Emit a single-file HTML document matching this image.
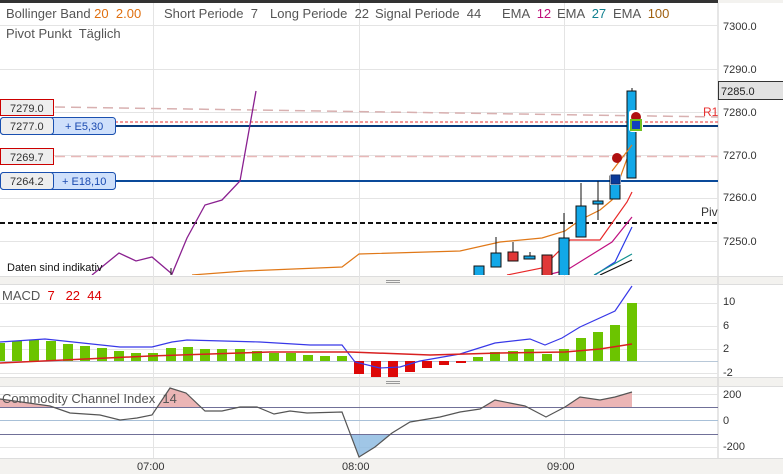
<!DOCTYPE html>
<html><head><meta charset="utf-8"><style>
html,body{margin:0;padding:0;background:#fff;width:783px;height:474px;overflow:hidden}
svg{display:block;font-family:"Liberation Sans",sans-serif}
svg text{white-space:pre}
</style></head><body>
<svg width="783" height="474" viewBox="0 0 783 474" xmlns="http://www.w3.org/2000/svg" xml:space="preserve">
<defs>
<clipPath id="main"><rect x="0" y="3" width="718" height="272"/></clipPath>
<clipPath id="macd"><rect x="0" y="285" width="718" height="92"/></clipPath>
<clipPath id="up"><rect x="0" y="380" width="718" height="27"/></clipPath>
<clipPath id="dn"><rect x="0" y="434" width="718" height="30"/></clipPath>
</defs>
<rect x="0" y="0" width="783" height="474" fill="#fff"/>
<rect x="0" y="0" width="718" height="3" fill="#333"/>
<rect x="718" y="0" width="65" height="3" fill="#666"/>
<rect x="0" y="276" width="783" height="9" fill="#f3f2ef"/>
<rect x="0" y="377" width="783" height="10" fill="#f3f2ef"/>
<rect x="0" y="458" width="783" height="16" fill="#f3f2ef"/>
<rect x="718" y="0" width="65" height="474" fill="#f3f2ef"/>
<rect x="718" y="3" width="65" height="273" fill="#fff"/>
<rect x="718" y="285" width="65" height="92" fill="#fff"/>
<rect x="718" y="387" width="65" height="71" fill="#fff"/>
<line x1="718" y1="3" x2="718" y2="458" stroke="#ccc"/>
<line x1="0" y1="276.5" x2="783" y2="276.5" stroke="#ddd"/>
<line x1="0" y1="284.5" x2="783" y2="284.5" stroke="#ddd"/>
<line x1="0" y1="377.5" x2="783" y2="377.5" stroke="#ddd"/>
<line x1="0" y1="386.5" x2="783" y2="386.5" stroke="#ddd"/>
<line x1="0" y1="458.5" x2="783" y2="458.5" stroke="#ddd"/>
<g stroke="#999" stroke-width="1"><line x1="386" y1="280.5" x2="400" y2="280.5"/><line x1="386" y1="282.5" x2="400" y2="282.5"/><line x1="386" y1="381.5" x2="400" y2="381.5"/><line x1="386" y1="383.5" x2="400" y2="383.5"/></g>
<g stroke="#e4e4e4" stroke-width="1">
<line x1="0" y1="25.5" x2="718" y2="25.5"/>
<line x1="0" y1="69.5" x2="718" y2="69.5"/>
<line x1="0" y1="112.5" x2="718" y2="112.5"/>
<line x1="0" y1="155.5" x2="718" y2="155.5"/>
<line x1="0" y1="198.5" x2="718" y2="198.5"/>
<line x1="0" y1="241.5" x2="718" y2="241.5"/>
<line x1="153.5" y1="3" x2="153.5" y2="458"/>
<line x1="359.5" y1="3" x2="359.5" y2="458"/>
<line x1="564.5" y1="3" x2="564.5" y2="458"/>
<line x1="0" y1="303.5" x2="718" y2="303.5"/>
<line x1="0" y1="326.5" x2="718" y2="326.5"/>
<line x1="0" y1="349.5" x2="718" y2="349.5"/>
<line x1="0" y1="373.5" x2="718" y2="373.5"/>
<line x1="0" y1="394.5" x2="718" y2="394.5"/>
<line x1="0" y1="447.5" x2="718" y2="447.5"/>
</g>
<line x1="0" y1="361.5" x2="718" y2="361.5" stroke="#b8c8d8"/>
<g font-size="13" fill="#555">
<text x="6" y="18">Bollinger Band <tspan fill="#e07010">20</tspan>  <tspan fill="#e07010">2.00</tspan></text>
<text x="164" y="18">Short Periode  7</text>
<text x="270" y="18">Long Periode  22</text>
<text x="375" y="18">Signal Periode  44</text>
<text x="502" y="18">EMA  <tspan fill="#c0107a">12</tspan></text>
<text x="557" y="18">EMA  <tspan fill="#108090">27</tspan></text>
<text x="613" y="18">EMA  <tspan fill="#a06010">100</tspan></text>
<text x="6" y="38">Pivot Punkt  Täglich</text>
</g>
<g clip-path="url(#main)">
<line x1="55" y1="107" x2="718" y2="117" stroke="#d8b0b0" stroke-width="1.5" stroke-dasharray="10,6"/>
<line x1="0" y1="122" x2="718" y2="122" stroke="#e83030" stroke-dasharray="3,2"/>
<line x1="55" y1="156.5" x2="718" y2="156.5" stroke="#e8b8b8" stroke-width="1.5" stroke-dasharray="10,6"/>
<line x1="0" y1="126" x2="718" y2="126" stroke="#0a3a7a" stroke-width="2"/>
<line x1="0" y1="181" x2="718" y2="181" stroke="#0a4a9a" stroke-width="2"/>
<line x1="0" y1="223" x2="718" y2="223" stroke="#111" stroke-width="2" stroke-dasharray="5,3"/>
<polyline fill="none" stroke="#8a2090" stroke-width="1.3" points="92,275 119,253 136,261 152,257 172,274 187,238 205,205 222,200 240,181 256,91"/>
<polyline fill="none" stroke="#e07818" stroke-width="1.2" points="192,275 245,271 342,267 359,254 460,251 500,242 542,238 565,231 580,220 600,210 612,200 632,145"/>
<polyline fill="none" stroke="#e82828" stroke-width="1.2" points="507,275 542,268 570,240 600,240 627,202 632,192"/>
<polyline fill="none" stroke="#c01080" stroke-width="1.2" points="547,275 567,270 612,242 632,217"/>
<polyline fill="none" stroke="#2a3ae8" stroke-width="1.2" points="595,275 615,262 632,227"/>
<polyline fill="none" stroke="#109090" stroke-width="1.2" points="594,275 632,254"/>
<polyline fill="none" stroke="#111" stroke-width="1.2" points="600,275 632,260"/>
<g stroke="#111" stroke-width="1">
<line x1="171" y1="268" x2="171" y2="276"/>
<line x1="496" y1="237" x2="496" y2="253"/>
<line x1="513" y1="242" x2="513" y2="252"/>
<line x1="530" y1="252" x2="530" y2="259"/>
<line x1="564" y1="213" x2="564" y2="238"/>
<line x1="581" y1="183" x2="581" y2="206"/>
<line x1="598" y1="181" x2="598" y2="220"/>
<line x1="632" y1="88" x2="632" y2="91"/>
<rect x="474" y="266" width="10" height="12" fill="#12a8e8"/>
<rect x="491" y="253" width="10" height="14" fill="#12a8e8"/>
<rect x="508" y="252" width="10" height="9" fill="#e03838"/>
<rect x="524" y="256" width="11" height="3" fill="#12a8e8"/>
<rect x="542" y="255" width="10" height="22" fill="#e03838"/>
<rect x="559" y="238" width="10" height="39" fill="#12a8e8"/>
<rect x="576" y="206" width="10" height="31" fill="#12a8e8"/>
<rect x="593" y="201" width="10" height="3" fill="#12a8e8"/>
<rect x="610" y="176" width="10" height="23" fill="#12a8e8"/>
<rect x="627" y="91" width="9" height="87" fill="#12a8e8"/>
</g>
<line x1="612" y1="171" x2="632" y2="145" stroke="#e07818" stroke-width="1.2"/>
<rect x="610" y="174" width="11" height="11" fill="#fff"/>
<rect x="611" y="175" width="9" height="9" fill="#0a3a9a" stroke="#0a2a6a"/>
<circle cx="617" cy="158" r="5" fill="#b01010"/>
<rect x="629" y="110" width="14" height="22" fill="#fff" rx="3"/>
<circle cx="636" cy="117" r="5" fill="#b01010"/>
<rect x="631" y="120" width="10" height="10" fill="#1040c0" stroke="#70c020" stroke-width="2"/>
</g>
<text x="703" y="116" font-size="12" fill="#e83030">R1</text>
<text x="701" y="216" font-size="12" fill="#333">Piv</text>
<text x="7" y="271" font-size="11" fill="#111">Daten sind indikativ</text>
<g font-size="11" fill="#333">
<rect x="0.5" y="99.5" width="53" height="16" fill="#eee" stroke="#c00" />
<text x="10" y="112">7279.0</text>
<rect x="0.5" y="117.5" width="115" height="17" rx="3" fill="#cfe0fb" stroke="#1a50b0"/>
<rect x="0.5" y="117.5" width="53" height="17" rx="3" fill="#eee" stroke="#1a50b0"/>
<text x="10" y="130">7277.0</text>
<text x="65" y="130" fill="#1a4ab0">+ E5,30</text>
<rect x="0.5" y="148.5" width="53" height="16" fill="#eee" stroke="#c00"/>
<text x="10" y="161">7269.7</text>
<rect x="0.5" y="172.5" width="115" height="17" rx="3" fill="#cfe0fb" stroke="#1a50b0"/>
<rect x="0.5" y="172.5" width="53" height="17" rx="3" fill="#eee" stroke="#1a50b0"/>
<text x="10" y="185">7264.2</text>
<text x="62" y="185" fill="#1a4ab0">+ E18,10</text>
</g>
<g font-size="11" fill="#333">
<text x="723" y="30">7300.0</text>
<text x="723" y="73">7290.0</text>
<text x="723" y="116">7280.0</text>
<text x="723" y="159">7270.0</text>
<text x="723" y="201">7260.0</text>
<text x="723" y="245">7250.0</text>
</g>
<rect x="718.5" y="81.5" width="66" height="18" fill="#e2e2e2" stroke="#333"/>
<text x="721" y="95" font-size="11" fill="#222">7285.0</text>
<g clip-path="url(#macd)">
<g fill="#6cc400">
<rect x="-5" y="343" width="10" height="18"/><rect x="12" y="341" width="10" height="20"/><rect x="29" y="340" width="10" height="21"/><rect x="46" y="341" width="10" height="20"/><rect x="63" y="344" width="10" height="17"/><rect x="80" y="346" width="10" height="15"/><rect x="97" y="348" width="10" height="13"/><rect x="114" y="351" width="10" height="10"/><rect x="131" y="353" width="10" height="8"/><rect x="148" y="353" width="10" height="8"/><rect x="166" y="348" width="10" height="13"/><rect x="183" y="347" width="10" height="14"/><rect x="200" y="349" width="10" height="12"/><rect x="217" y="349" width="10" height="12"/><rect x="235" y="349" width="10" height="12"/><rect x="252" y="351" width="10" height="10"/><rect x="269" y="353" width="10" height="8"/><rect x="286" y="353" width="10" height="8"/><rect x="303" y="355" width="10" height="6"/><rect x="320" y="356" width="10" height="5"/><rect x="337" y="356" width="10" height="5"/>
<rect x="473" y="357" width="10" height="4"/><rect x="490" y="352" width="10" height="9"/><rect x="508" y="351" width="10" height="10"/><rect x="524" y="349" width="10" height="12"/><rect x="542" y="354" width="10" height="7"/><rect x="559" y="349" width="10" height="12"/><rect x="576" y="338" width="10" height="23"/><rect x="593" y="332" width="10" height="29"/><rect x="610" y="325" width="10" height="36"/><rect x="627" y="303" width="10" height="58"/>
</g>
<g fill="#dd0808">
<rect x="354" y="361" width="10" height="13"/><rect x="371" y="361" width="10" height="16"/><rect x="388" y="361" width="10" height="16"/><rect x="405" y="361" width="10" height="11"/><rect x="422" y="361" width="10" height="7"/><rect x="439" y="361" width="10" height="4"/><rect x="456" y="361" width="10" height="2"/>
</g>
<polyline fill="none" stroke="#3838e8" stroke-width="1.2" points="0,342 45,339 120,347 152,347 172,342 187,340 260,342 310,345 342,345 355,362 380,368 400,367 420,361 460,354 495,343 530,339 545,345 562,338 580,327 615,311 632,286"/>
<polyline fill="none" stroke="#d82020" stroke-width="1.5" points="0,363 150,356 270,352 350,352 430,355 500,353 565,352 600,349 632,344"/>
</g>
<text x="2" y="300" font-size="13" fill="#555">MACD  <tspan fill="#d00">7</tspan>   <tspan fill="#d00">22</tspan>  <tspan fill="#d00">44</tspan></text>
<g font-size="11" fill="#333">
<text x="723" y="305">10</text><text x="723" y="329">6</text><text x="723" y="352">2</text><text x="723" y="376">-2</text>
</g>
<g>
<polygon clip-path="url(#up)" fill="#e8a8a8" fill-opacity="0.85" points="0,399 50,406 70,413 100,415 120,420 137,418 152,415 170,388 186,393 205,411 222,411 240,407 257,407 274,414 290,411 307,413 342,412 359,457 375,447 392,433 410,422 440,417 460,412 480,409 495,400 525,406 546,417 565,407 580,397 600,400 615,397 632,392 632,407 0,407"/>
<polygon clip-path="url(#dn)" fill="#88b8e0" fill-opacity="0.8" points="342,434 342,412 359,457 375,447 392,433 410,434"/>
<line x1="0" y1="407.5" x2="718" y2="407.5" stroke="#707098"/>
<line x1="0" y1="420.5" x2="718" y2="420.5" stroke="#a8c0d8"/>
<line x1="0" y1="434.5" x2="718" y2="434.5" stroke="#707098"/>
<polyline fill="none" stroke="#555" stroke-width="1.2" points="0,399 50,406 70,413 100,415 120,420 137,418 152,415 170,388 186,393 205,411 222,411 240,407 257,407 274,414 290,411 307,413 342,412 359,457 375,447 392,433 410,422 440,417 460,412 480,409 495,400 525,406 546,417 565,407 580,397 600,400 615,397 632,392"/>
</g>
<text x="2" y="403" font-size="13" fill="#555">Commodity Channel Index  14</text>
<g font-size="11" fill="#333">
<text x="723" y="398">200</text><text x="723" y="424">0</text><text x="723" y="450">-200</text>
</g>
<g font-size="11" fill="#333">
<text x="137" y="470">07:00</text><text x="342" y="470">08:00</text><text x="547" y="470">09:00</text>
</g>
</svg>
</body></html>
